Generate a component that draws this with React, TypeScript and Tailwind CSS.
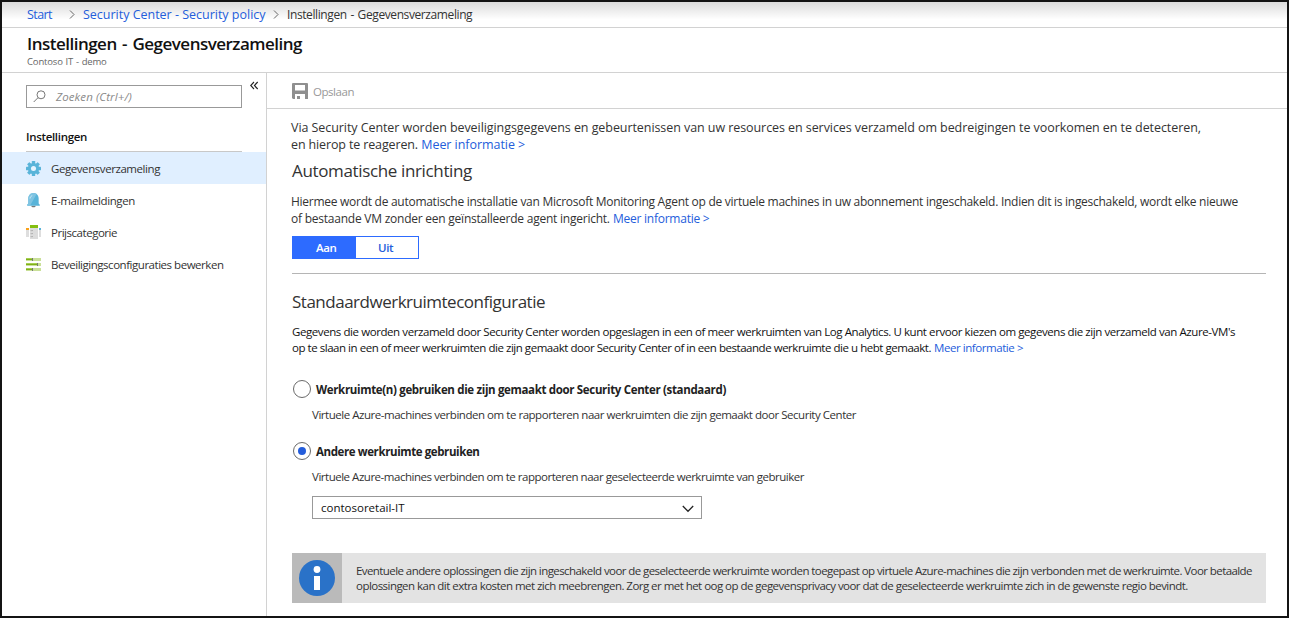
import type { ReactNode } from "react";

function GearIcon() {
  return (
    <svg width="15" height="15" viewBox="0 0 16 16">
      <g fill="#59b4d9">
        <rect x="6.2" y="0" width="3.6" height="16" rx="0.6" />
        <rect x="6.2" y="0" width="3.6" height="16" rx="0.6" transform="rotate(45 8 8)" />
        <rect x="6.2" y="0" width="3.6" height="16" rx="0.6" transform="rotate(90 8 8)" />
        <rect x="6.2" y="0" width="3.6" height="16" rx="0.6" transform="rotate(135 8 8)" />
        <circle cx="8" cy="8" r="6" />
      </g>
      <circle cx="8" cy="8" r="2.7" fill="#e6f4ff" />
    </svg>
  );
}

function BellIcon() {
  return (
    <svg width="15" height="16" viewBox="0 0 16 16">
      <path d="M5.7 14h4.6c0 1-1 1.7-2.3 1.7S5.7 15 5.7 14z" fill="#7a7a7a" />
      <path d="M1.3 14v-1l1.2-1.4V6.2C2.5 3 5 0.600 8 0.600s5.500 2.400 5.500 5.600v5.400L14.700 13v1z" fill="#59b4d9" />
      <path d="M2.5 11.6V6.2C2.5 3 5 0.600 8 0.600c1.300 0 2.400.4 3.300 1L4.600 13.500H1.300V13z" fill="#7fc4e2" />
      <path d="M4.300 6.400c.1-1.500 1-2.500 2.300-3" stroke="#d9eef7" strokeWidth="1" fill="none" />
    </svg>
  );
}

function PricingIcon() {
  return (
    <svg width="15" height="15" viewBox="0 0 15 15">
      <path d="M0 4h3v8H0z" fill="#dedede" />
      <path d="M13 4h2v8h-2z" fill="#dedede" />
      <path d="M0 3h3v2H0z" fill="#f9a11b" />
      <path d="M13 3h2v2h-2z" fill="#59b4d9" />
      <path d="M4 3h8v11H4z" fill="#dcdcdc" />
      <path d="M4 0h8v3H4z" fill="#84bf10" />
      <path d="M5 5.500l.6.600L6.600 5M5 8.500l.6.600L6.600 8M5 11.500l.6.600L6.600 11" stroke="#8a8a8a" strokeWidth="0.800" fill="none" />
    </svg>
  );
}

function SlidersIcon() {
  return (
    <svg width="15" height="15" viewBox="0 0 15 15">
      <path d="M0 1h15v3H0zM0 6h15v3H0zM0 11h15v3H0z" fill="#c9e098" />
      <path d="M0 2h6v1H0zM0 7h11v1H0zM0 12h6v1H0z" fill="#7fb018" />
      <path d="M0 1h6v1H0zM0 6h11v1H0zM0 11h6v1H0z" fill="#a6cf52" />
      <path d="M6 1h1v3H6zM11 6h1v3h-1zM6 11h1v3H6z" fill="#777" />
    </svg>
  );
}

function SaveIcon() {
  return (
    <svg width="16" height="16" viewBox="0 0 16 16" className="-mt-0.5">
      <path
        fillRule="evenodd"
        d="M1 0h14a1 1 0 0 1 1 1v15h-3v-5H3v5H1l-1-1V1a1 1 0 0 1 1-1zM3 2V7.500h10V2z"
        fill="#8f8f8f"
      />
      <path d="M5 13h3v3H5z" fill="#8f8f8f" />
    </svg>
  );
}

function Crumb() {
  return (
    <svg width="6" height="9" viewBox="0 0 6 9" className="shrink-0">
      <path d="M1 0.500l4 4-4 4" stroke="#666" fill="none" />
    </svg>
  );
}

function NavItem({ icon, active, children }: { icon: ReactNode; active?: boolean; children: ReactNode }) {
  return (
    <li className={`flex h-8 items-center gap-2.5 pl-6 text-[11.5px] leading-4 text-[#333] ${active ? "bg-[#e0efff]" : ""}`}>
      {icon}
      <span className="pt-0.5">{children}</span>
    </li>
  );
}

function Radio({ checked }: { checked?: boolean }) {
  return (
    <span className="flex size-[18px] shrink-0 items-center justify-center rounded-full border border-[#6a6a6a] bg-white">
      {checked && <span className="size-2 rounded-full bg-[#245ddb]" />}
    </span>
  );
}

export default function App() {
  return (
    <div className="flex h-[618px] w-[1289px] flex-col overflow-hidden whitespace-nowrap border-2 border-[#141414] bg-white font-['Open_Sans',sans-serif] text-[#333]">
      <nav className="flex h-[26px] shrink-0 items-center border-b border-[#d2d2d2] bg-linear-to-b from-[#dcdcdc] to-white to-70% pl-[25px] text-[12.5px] leading-[17px] text-[#245ddb]">
        <span className="w-[42px] tracking-[-0.56px]">Start</span>
        <Crumb />
        <span className="ml-2 w-[190px] tracking-[-0.012px]">Security Center - Security policy</span>
        <Crumb />
        <span className="ml-2 text-xs leading-[17px] tracking-[-0.4px] text-[#333] [word-spacing:1px]">Instellingen - Gegevensverzameling</span>
      </nav>

      <header className="flex h-[45px] shrink-0 flex-col border-b border-[#d2d2d2] pt-1 pl-[25px]">
        <h1 className="text-[17px] leading-6 font-semibold tracking-[-0.51px] text-[#111] [word-spacing:1.5px]">Instellingen - Gegevensverzameling</h1>
        <p className="text-[9.5px] leading-3 tracking-[-0.16px] text-[#666] [word-spacing:0.5px]">Contoso IT - demo</p>
      </header>

      <div className="flex min-h-0 flex-1">
        <aside className="w-[265px] shrink-0 border-r border-[#d2d2d2]">
          <div className="flex pt-3 pl-6">
            <div className="flex h-[23px] w-[216px] items-center gap-2.5 border border-[#999] pl-1.5">
              <svg width="13" height="13" viewBox="0 0 13 13">
                <circle cx="8" cy="4.800" r="4" stroke="#777" fill="none" />
                <path d="M5 7.700L0.700 12" stroke="#777" />
              </svg>
              <span className="text-[11.5px] leading-4 tracking-[0.1px] text-[#8a8a8a] italic">Zoeken (Ctrl+/)</span>
            </div>
            <svg width="9" height="9" viewBox="0 0 9 9" className="-mt-1 ml-2">
              <path d="M4 1L0.700 4.500 4 8M7.700 1L4.400 4.500 7.700 8" stroke="#222" strokeWidth="1.100" fill="none" />
            </svg>
          </div>
          <h2 className="mt-[21px] ml-6 h-[23px] w-[216px] border-b border-[#c8c8c8] text-[11.5px] leading-4 font-semibold tracking-[-0.32px] text-[#111]">
            Instellingen
          </h2>
          <ul>
            <NavItem icon={<GearIcon />} active>
              <span className="tracking-[-0.43px]">Gegevensverzameling</span>
            </NavItem>
            <NavItem icon={<BellIcon />}>
              <span className="tracking-[-0.38px]">E-mailmeldingen</span>
            </NavItem>
            <NavItem icon={<PricingIcon />}>
              <span className="tracking-[-0.47px]">Prijscategorie</span>
            </NavItem>
            <NavItem icon={<SlidersIcon />}>
              <span className="tracking-[-0.468px]">Beveiligingsconfiguraties bewerken</span>
            </NavItem>
          </ul>
        </aside>

        <main className="min-w-0 flex-1">
          <div className="flex h-9 items-center gap-[5px] border-b border-[#d2d2d2] pt-[2px] pl-[25px] text-[11.5px] leading-4 tracking-[-0.458px] text-[#999]">
            <SaveIcon />
            Opslaan
          </div>

          <div className="w-[999px] pt-2.5 pl-[25px]">
            <p className="-ml-px text-[12.5px] leading-[17px]">
              <span className="tracking-[-0.071px]">
                Via Security Center worden beveiligingsgegevens en gebeurtenissen van uw resources en services verzameld om bedreigingen te voorkomen en te detecteren,
              </span>
              <br />
              <span className="tracking-[-0.136px]">en hierop te reageren.</span>{" "}
              <a className="tracking-[-0.05px] text-[#245ddb]">Meer informatie &gt;</a>
            </p>
            <h3 className="mt-1.5 text-[17px] leading-6 tracking-[-0.355px]">Automatische inrichting</h3>
            <p className="mt-2.5 -ml-px text-xs leading-[17px]">
              <span className="tracking-[-0.272px]">
                Hiermee wordt de automatische installatie van Microsoft Monitoring Agent op de virtuele machines in uw abonnement ingeschakeld. Indien dit is ingeschakeld, wordt elke nieuwe
              </span>
              <br />
              <span className="tracking-[-0.235px]">of bestaande VM zonder een geïnstalleerde agent ingericht.</span>{" "}
              <a className="tracking-[-0.24px] text-[#245ddb]">Meer informatie &gt;</a>
            </p>

            <div className="mt-[9px] flex h-[23px] w-[127px] border border-[#2d6bff] text-[11.5px] leading-[21px] font-semibold">
              <span className="w-[63px] bg-[#2d6bff] pl-[23px] tracking-[-0.36px] text-white">Aan</span>
              <span className="flex-1 pl-[22px] tracking-[-0.36px] text-[#245ddb]">Uit</span>
            </div>

            <hr className="mt-3.5 border-[#b5b5b5]" />

            <h3 className="mt-4 text-[17px] leading-6 tracking-[-0.492px]">Standaardwerkruimteconfiguratie</h3>
            <p className="mt-2.5 text-[11.5px] leading-4 text-[#111]">
              <span className="tracking-[-0.419px]">
                Gegevens die worden verzameld door Security Center worden opgeslagen in een of meer werkruimten van Log Analytics. U kunt ervoor kiezen om gegevens die zijn verzameld van Azure-VM's
              </span>
              <br />
              <span className="tracking-[-0.466px]">
                op te slaan in een of meer werkruimten die zijn gemaakt door Security Center of in een bestaande werkruimte die u hebt gemaakt.
              </span>{" "}
              <a className="tracking-[-0.438px] text-[#245ddb]">Meer informatie &gt;</a>
            </p>

            <div className="mt-6 flex h-[18px] items-center gap-[5px] pl-px text-[11.5px] leading-[18px] font-bold text-[#222]">
              <Radio />
              <span className="pt-0.5 tracking-[-0.337px]">Werkruimte(n) gebruiken die zijn gemaakt door Security Center (standaard)</span>
            </div>
            <p className="mt-[9px] ml-5 text-[11.5px] leading-4 tracking-[-0.465px]">
              Virtuele Azure-machines verbinden om te rapporteren naar werkruimten die zijn gemaakt door Security Center
            </p>

            <div className="mt-[19px] flex h-[18px] items-center gap-[5px] pl-px text-[11.5px] leading-[18px] font-bold text-[#222]">
              <Radio checked />
              <span className="pt-0.5 tracking-[-0.399px]">Andere werkruimte gebruiken</span>
            </div>
            <p className="mt-[9px] ml-5 text-[11.5px] leading-4 tracking-[-0.479px]">
              Virtuele Azure-machines verbinden om te rapporteren naar geselecteerde werkruimte van gebruiker
            </p>
            <div className="mt-[11px] ml-5 flex h-[23px] w-[390px] items-center justify-between border border-[#999] pr-[7px] pl-2 text-[11.5px] leading-4 text-[#111]">
              contosoretail-IT
              <svg width="12" height="8" viewBox="0 0 12 8" className="mt-0.5">
                <path d="M0.800 1L6 6.300 11.200 1" stroke="#222" strokeWidth="1.300" fill="none" />
              </svg>
            </div>

            <div className="mt-[34px] flex h-[50px] bg-[#e3e3e3]">
              <div className="flex w-[50px] items-center justify-center bg-[#bababa]">
                <svg width="36" height="36" viewBox="0 0 36 36">
                  <circle cx="18" cy="18" r="18" fill="#2a72c8" />
                  <circle cx="18" cy="9.500" r="3.400" fill="#fff" />
                  <path d="M15 16h6V30h-6z" fill="#fff" />
                </svg>
              </div>
              <p className="pt-2.5 pl-3.5 text-[11.5px] leading-[15px]">
                <span className="tracking-[-0.576px]">
                  Eventuele andere oplossingen die zijn ingeschakeld voor de geselecteerde werkruimte worden toegepast op virtuele Azure-machines die zijn verbonden met de werkruimte. Voor betaalde
                </span>
                <br />
                <span className="tracking-[-0.535px]">
                  oplossingen kan dit extra kosten met zich meebrengen. Zorg er met het oog op de gegevensprivacy voor dat de geselecteerde werkruimte zich in de gewenste regio bevindt.
                </span>
              </p>
            </div>
          </div>
        </main>
      </div>
    </div>
  );
}
